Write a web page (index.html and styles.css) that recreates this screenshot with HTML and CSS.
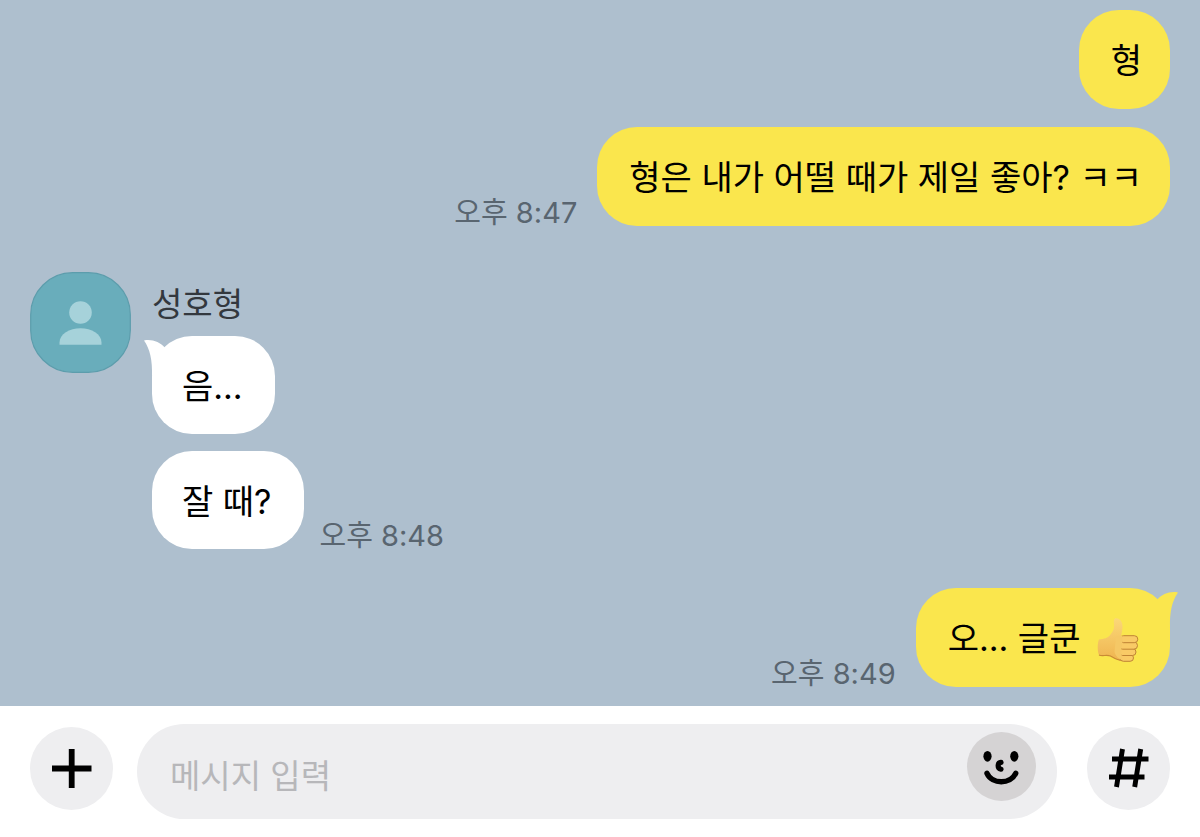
FILE: index.html
```html
<!DOCTYPE html>
<html lang="ko">
<head>
  <meta charset="utf-8">
  <meta name="viewport" content="width=device-width, initial-scale=1">
  <title>성호형</title>
  <link rel="stylesheet" href="styles.css">
</head>
<body>

<main class="chat">
  <div class="group mine">
    <div class="row">
      <div class="bubble">형</div>
    </div>
    <div class="row">
      <time class="time">오후 8:47</time>
      <div class="bubble">형은 내가 어떨 때가 제일 좋아? ㅋㅋ</div>
    </div>
  </div>

  <div class="group theirs">
    <svg class="avatar" viewBox="0 0 101 101" aria-hidden="true">
      <rect x=".7" y=".7" width="99.6" height="99.6" rx="42" fill="#69adbb" stroke="#5c9dac" stroke-width="1.2"/>
      <circle cx="50.5" cy="40.5" r="11.3" fill="#a6d2da"/>
      <path d="M29.5 72.7v-2.2c0-8.5 10-14.3 21-14.3s21 5.8 21 14.3v2.2z" fill="#a6d2da"/>
    </svg>
    <div class="messages">
      <div class="name">성호형</div>
      <div class="row">
        <div class="bubble">
          <svg class="tail" viewBox="0 0 34 40" aria-hidden="true">
            <path d="M0 4.500C8 3 16 6 21 12L30 20 8 40C8.500 24 6 13 0 4.500z" fill="#fff"/>
          </svg>
          음...
        </div>
      </div>
      <div class="row">
        <div class="bubble">잘 때?</div>
        <time class="time">오후 8:48</time>
      </div>
    </div>
  </div>

  <div class="group mine">
    <div class="row">
      <time class="time">오후 8:49</time>
      <div class="bubble">
        <svg class="tail" viewBox="0 0 34 40" aria-hidden="true">
          <path d="M0 4.500C8 3 16 6 21 12L30 20 8 40C8.500 24 6 13 0 4.500z" fill="#fae64d"/>
        </svg>
        오... 글쿤
        <svg class="thumb" viewBox="0 0 42 44" role="img" aria-label="좋아요">
          <defs>
            <linearGradient id="skin" x1="0" y1="0" x2="0" y2="1">
              <stop offset="0" stop-color="#fbd878"/>
              <stop offset="1" stop-color="#efb450"/>
            </linearGradient>
          </defs>
          <path d="M2 21.500C7 21 11 20 13.500 16.500 16.500 13 17.500 10 17 6 16.500 2 17 .3 19.500 .3 23 .3 25.300 4 25.500 8 25.700 12 24.500 15 24 18.500L25 42.500C20 42.500 17 40 13.500 38 10 36.500 5 38.500 2 37 .3 33 .3 25 2 21.500z" fill="url(#skin)"/>
          <path d="M2 37C5 38.500 10 36.500 13.500 38 17 40 20 42.500 25 42.500" fill="none" stroke="#c98b35" stroke-width="1.2"/>
          <g fill="#f9ca66" stroke="#bf8335" stroke-width="1">
            <rect x="23" y="36.500" width="13.500" height="6.800" rx="3.400"/>
            <rect x="22" y="30.500" width="17" height="7" rx="3.500"/>
            <rect x="22" y="24" width="18.500" height="7.200" rx="3.600"/>
            <rect x="23" y="17.700" width="17.800" height="7" rx="3.500"/>
          </g>
          <path d="M19 18h6.500v6l-1 6v6l1 6c-4-1-7-4-8-8z" fill="#f5c866"/>
        </svg>
      </div>
    </div>
  </div>
</main>

<form class="composer">
  <button class="round" type="button" aria-label="추가">
    <svg viewBox="0 0 83 83" aria-hidden="true">
      <path d="M22 41.500h39.500M41.700 22v39" stroke="#000" stroke-width="5.800" fill="none"/>
    </svg>
  </button>
  <div class="field">
    <input class="text" type="text" placeholder="메시지 입력" aria-label="메시지 입력">
    <button class="emoji" type="button" aria-label="이모티콘">
      <svg viewBox="0 0 69 69" aria-hidden="true">
        <ellipse cx="20.500" cy="24.300" rx="4.100" ry="5.400"/>
        <ellipse cx="47.300" cy="24.300" rx="4.100" ry="5.400"/>
        <path d="M34 30.400C30.200 31 30.200 36.500 34 37.200" fill="none" stroke="#000" stroke-width="5.200" stroke-linecap="round"/>
        <path d="M20 41.300C25 52.500 43.500 52.500 48.700 41.300" fill="none" stroke="#000" stroke-width="5.400" stroke-linecap="round"/>
      </svg>
    </button>
  </div>
  <button class="round" type="button" aria-label="샵 검색">
    <svg viewBox="0 0 83 83" aria-hidden="true">
      <path d="M35.500 22L29.500 60M53.700 22L47.700 60M25 32h36.500M22 50h35.500" stroke="#000" stroke-width="4.900" fill="none"/>
    </svg>
  </button>
</form>

</body>
</html>
```

FILE: styles.css
```css
* {
  box-sizing: border-box;
}

body {
  margin: 0;
  min-height: 100vh;
  display: flex;
  flex-direction: column;
  background: #fff;
  color: #000;
  font-family: Inter, "Noto Sans CJK KR", sans-serif;
}

.chat {
  flex: 1;
  display: flex;
  flex-direction: column;
  padding: 10px 30px 18px;
  background: #aebfce;
}

.group {
  display: flex;
  flex-direction: column;
  gap: 18px;
}

.row {
  display: flex;
  align-items: flex-end;
}

.mine .row {
  justify-content: flex-end;
  gap: 20px;
}

.theirs {
  flex-direction: row;
  gap: 21px;
  margin: 46px 0 39px;
}

.theirs .row {
  gap: 16px;
}

.messages {
  display: flex;
  flex-direction: column;
  gap: 17px;
}

.avatar {
  width: 101px;
  height: 101px;
}

.name {
  color: #33383e;
  font-size: 33px;
  line-height: 64px;
  margin-bottom: -17px;
}

.bubble {
  position: relative;
  padding: 27px 32px 24px 30px;
  border-radius: 40px;
  background: #fff;
  font-size: 34px;
  line-height: 47px;
}

.mine .bubble {
  padding: 27px 28px 25px 32px;
  background: #fae64d;
}

/* little horn on the first bubble of a group */
.tail {
  position: absolute;
  top: 0;
  left: -8px;
  width: 34px;
  height: 40px;
}

.mine .tail {
  left: auto;
  right: -8px;
  transform: scaleX(-1);
}

.thumb {
  width: 42px;
  height: 44px;
  margin: 0 3px 0 7px;
  vertical-align: -11px;
}

.time {
  color: #596570;
  font-size: 29px;
  line-height: 26px;
}

.composer {
  display: flex;
  align-items: flex-start;
  padding: 18px 30px;
  background: #fff;
}

.round,
.emoji {
  flex: none;
  padding: 0;
  border: 0;
  border-radius: 50%;
  cursor: pointer;
}

.round {
  width: 83px;
  height: 83px;
  margin-top: 3px;
  background: #eeeef0;
}

.round svg,
.emoji svg {
  display: block;
  width: 100%;
}

.field {
  flex: 1;
  display: flex;
  align-items: flex-start;
  height: 95px;
  margin: 0 30px 0 24px;
  padding: 8px 21px 0 33px;
  border-radius: 48px;
  background: #eeeef0;
}

.text {
  flex: 1;
  min-width: 0;
  height: 87px;
  padding: 0;
  border: 0;
  outline: 0;
  background: none;
  color: #000;
  font-family: inherit;
  font-size: 33px;
}

.text::placeholder {
  color: #b7b7ba;
}

.emoji {
  width: 69px;
  height: 69px;
  background: #d5d3d4;
}
```
